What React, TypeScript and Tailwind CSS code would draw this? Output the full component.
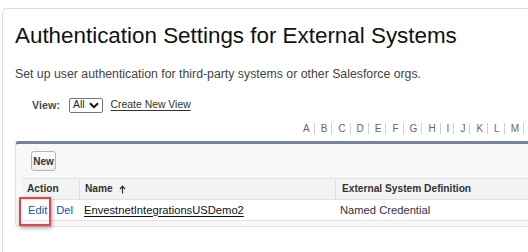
import React from "react";

const letters = ["A", "B", "C", "D", "E", "F", "G", "H", "I", "J", "K", "L", "M"];

export default function App() {
  return (
    <div
      className="relative w-[528px] h-[252px] overflow-hidden bg-white pt-[8px] pl-[2px]"
      style={{ fontFamily: '"Liberation Sans", Arial, sans-serif' }}
    >
      <div className="h-[260px] w-[600px] rounded-tl-[5px] border-l border-t border-[#dcdcdc] pl-[12px]">
        <h1 className="mt-[14px] text-[22.4px] leading-[26px] text-[#111111] whitespace-nowrap">
          Authentication Settings for External Systems
        </h1>
        <p className="mt-[17px] text-[12.3px] leading-[16px] text-[#444444] whitespace-nowrap">
          Set up user authentication for third-party systems or other Salesforce orgs.
        </p>
        <div className="mt-[15px] flex items-center pl-[17px] h-[16px]">
          <span className="text-[10.8px] font-bold text-[#4a4a4a]">View:</span>
          <span className="ml-[9px] flex h-[15px] items-center gap-[4px] rounded-[2px] border border-[#767676] pl-[3px] pr-[3px] text-[10.4px] text-[#222]">
            All
            <svg width="10" height="7" viewBox="0 0 10 7">
              <path d="M1 1.2 L5 5.2 L9 1.2" fill="none" stroke="#111" strokeWidth="2" />
            </svg>
          </span>
          <span className="ml-[8px] text-[10.4px] text-[#333] underline underline-offset-[2px]">Create New View</span>
        </div>
        <div className="mt-[10px] flex h-[11px] items-center pl-[288px] text-[10px] text-[#666666]">
          {letters.map((l, i) => (
            <span
              key={l}
              className={
                i === 0
                  ? "pr-[4px] leading-[11px]"
                  : "border-l border-[#cfcfcf] pl-[6px] pr-[4px] leading-[11px]"
              }
            >
              {l}
            </span>
          ))}
          <span className="h-[11px] border-l border-[#cfcfcf]" />
        </div>
        <div className="mt-[7px] h-[86px] rounded-tl-[4px] rounded-bl-[4px] border-t-[3px] border-l border-b border-t-[#75819b] border-l-[#e2e2e2] border-b-[#e2e2e2] bg-[#f8f8f8] pl-[6px]">
          <div className="flex h-[34px] items-start pt-[7px] pl-[9px]">
            <span className="flex h-[20px] w-[25px] items-center justify-center rounded-[3px] border border-[#b5b5b5] bg-gradient-to-b from-white to-[#eeeeee] text-[10px] font-bold text-[#333]">
              New
            </span>
          </div>
          <div className="border-t border-[#e0e3e5]">
            <div className="flex h-[21px] items-center border-b border-[#e0e3e5] bg-[#f2f3f3] text-[10.2px] font-bold text-[#333]">
              <div className="w-[57px] pl-[5px]">Action</div>
              <div className="flex h-full w-[256px] items-center border-l border-[#e0e3e5] pl-[5px]">
                Name
                <svg className="ml-[6px]" width="7" height="9" viewBox="0 0 7 9">
                  <path d="M3.5 8.5 V1.5 M1 4 L3.5 1.2 L6 4" fill="none" stroke="#333" strokeWidth="1.2" />
                </svg>
              </div>
              <div className="flex h-full flex-1 items-center border-l border-[#e0e3e5] pl-[6px]">External System Definition</div>
            </div>
            <div className="flex h-[21px] items-center border-b border-[#e3e3e3] bg-white text-[11.2px]">
              <div className="w-[57px] pl-[6px] text-[#0b5cab] whitespace-nowrap">
                Edit<span className="ml-[9px]">Del</span>
              </div>
              <div className="w-[256px] pl-[5px] text-[#111] underline underline-offset-[2px]">EnvestnetIntegrationsUSDemo2</div>
              <div className="flex-1 pl-[5px] text-[#333]">Named Credential</div>
            </div>
          </div>
        </div>
      </div>
      <div className="absolute left-[19px] top-[197px] h-[29px] w-[32px] border-2 border-[#e5464a] shadow-[1px_2px_4px_rgba(0,0,0,0.35)]" />
    </div>
  );
}
